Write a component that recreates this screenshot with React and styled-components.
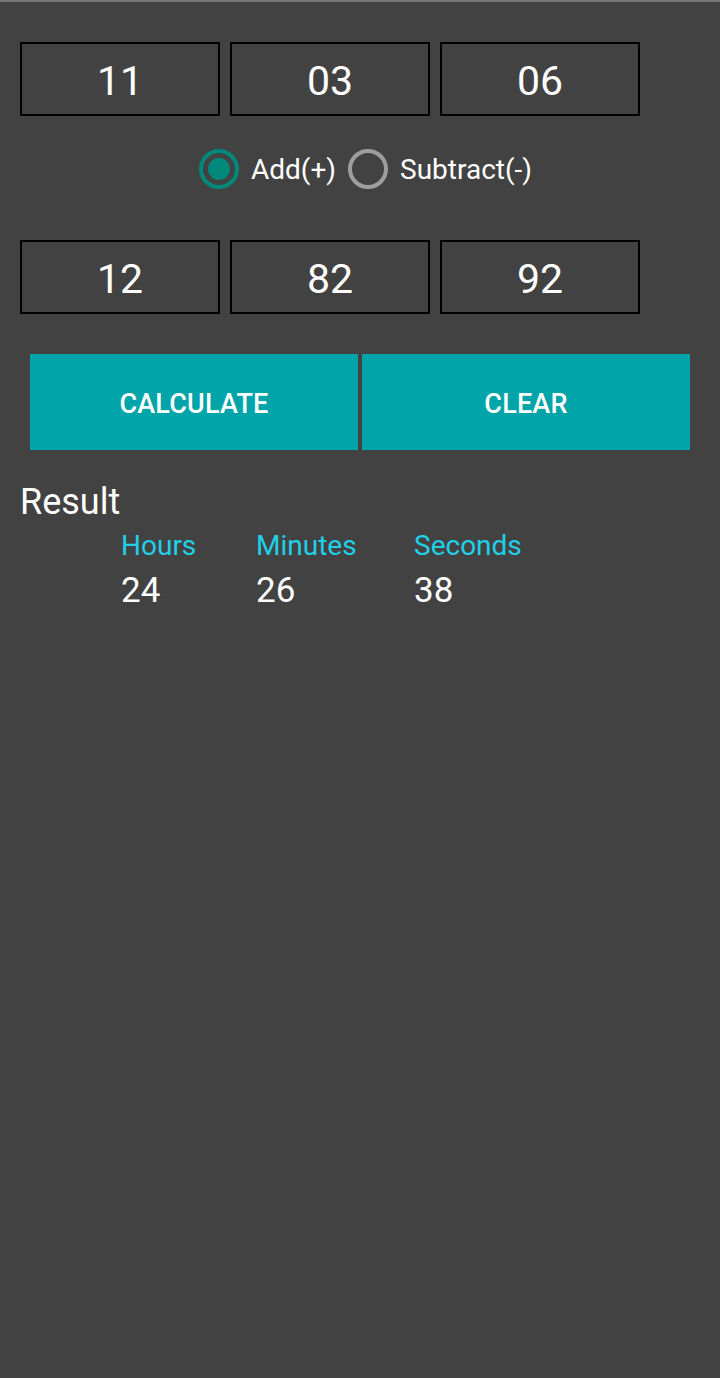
import React, { useState } from 'react';
import styled, { createGlobalStyle } from 'styled-components';

const GlobalStyle = createGlobalStyle`
  html, body {
    margin: 0;
    padding: 0;
    background: #424242;
  }
  body {
    font-family: Roboto, "Noto Sans", "Liberation Sans", sans-serif;
    color: #ffffff;
  }
`;

const Screen = styled.div`
  min-height: 1378px;
  background: #424242;
  border-top: 2px solid #777777;
  box-sizing: border-box;
  padding-top: 40px;
`;

const TimeRow = styled.div`
  display: flex;
  gap: 10px;
  padding-left: 20px;
`;

const TimeBox = styled.div`
  width: 200px;
  height: 74px;
  box-sizing: border-box;
  border: 2px solid #000000;
  display: flex;
  align-items: center;
  justify-content: center;
  font-size: 41px;
  padding-top: 4px;
  color: #ffffff;
`;

const RadioGroup = styled.div`
  display: flex;
  justify-content: center;
  align-items: center;
  gap: 12px;
  height: 50px;
  margin: 28px 0 46px;
  padding-left: 11px;
`;

const RadioOption = styled.label`
  display: flex;
  align-items: center;
  gap: 12px;
  font-size: 28px;
  cursor: pointer;
`;

const RadioCircle = styled.span`
  width: 40px;
  height: 40px;
  box-sizing: border-box;
  border-radius: 50%;
  border: 4px solid ${(p) => (p.checked ? '#00897b' : '#9e9e9e')};
  display: flex;
  align-items: center;
  justify-content: center;

  &::after {
    content: '';
    width: 22px;
    height: 22px;
    border-radius: 50%;
    background: #00897b;
    display: ${(p) => (p.checked ? 'block' : 'none')};
  }
`;

const ButtonRow = styled.div`
  display: flex;
  gap: 4px;
  padding: 0 30px;
  margin-top: 40px;
`;

const ActionButton = styled.button`
  flex: 1;
  height: 96px;
  border: none;
  background: #01a4a8;
  color: #ffffff;
  font-family: Roboto, "Noto Sans", sans-serif;
  font-weight: 500;
  font-size: 27px;
  letter-spacing: 0.2px;
  text-transform: uppercase;
  padding: 4px 0 0;
`;

const ResultTitle = styled.div`
  font-size: 36px;
  padding-left: 20px;
  margin-top: 32px;
  line-height: 40px;
`;

const ResultGrid = styled.div`
  display: flex;
  padding-left: 121px;
  margin-top: 6px;
`;

const ResultCol = styled.div`
  width: ${(p) => p.w}px;
  display: flex;
  flex-direction: column;
`;

const ResultLabel = styled.div`
  color: #1fd0e8;
  font-size: 28px;
  line-height: 36px;
`;

const ResultValue = styled.div`
  font-size: 35px;
  line-height: 46px;
  margin-top: 4px;
`;

const first = ['11', '03', '06'];
const second = ['12', '82', '92'];
const results = [
  { label: 'Hours', value: '24', w: 135 },
  { label: 'Minutes', value: '26', w: 158 },
  { label: 'Seconds', value: '38', w: 150 },
];

export default function App() {
  const [mode, setMode] = useState('add');

  return (
    <>
      <GlobalStyle />
      <Screen>
        <TimeRow>
          {first.map((v, i) => (
            <TimeBox key={i}>{v}</TimeBox>
          ))}
        </TimeRow>
        <RadioGroup>
          <RadioOption onClick={() => setMode('add')}>
            <RadioCircle checked={mode === 'add'} />
            Add(+)
          </RadioOption>
          <RadioOption onClick={() => setMode('sub')}>
            <RadioCircle checked={mode === 'sub'} />
            Subtract(-)
          </RadioOption>
        </RadioGroup>
        <TimeRow>
          {second.map((v, i) => (
            <TimeBox key={i}>{v}</TimeBox>
          ))}
        </TimeRow>
        <ButtonRow>
          <ActionButton>Calculate</ActionButton>
          <ActionButton>Clear</ActionButton>
        </ButtonRow>
        <ResultTitle>Result</ResultTitle>
        <ResultGrid>
          {results.map((r) => (
            <ResultCol key={r.label} w={r.w}>
              <ResultLabel>{r.label}</ResultLabel>
              <ResultValue>{r.value}</ResultValue>
            </ResultCol>
          ))}
        </ResultGrid>
      </Screen>
    </>
  );
}
